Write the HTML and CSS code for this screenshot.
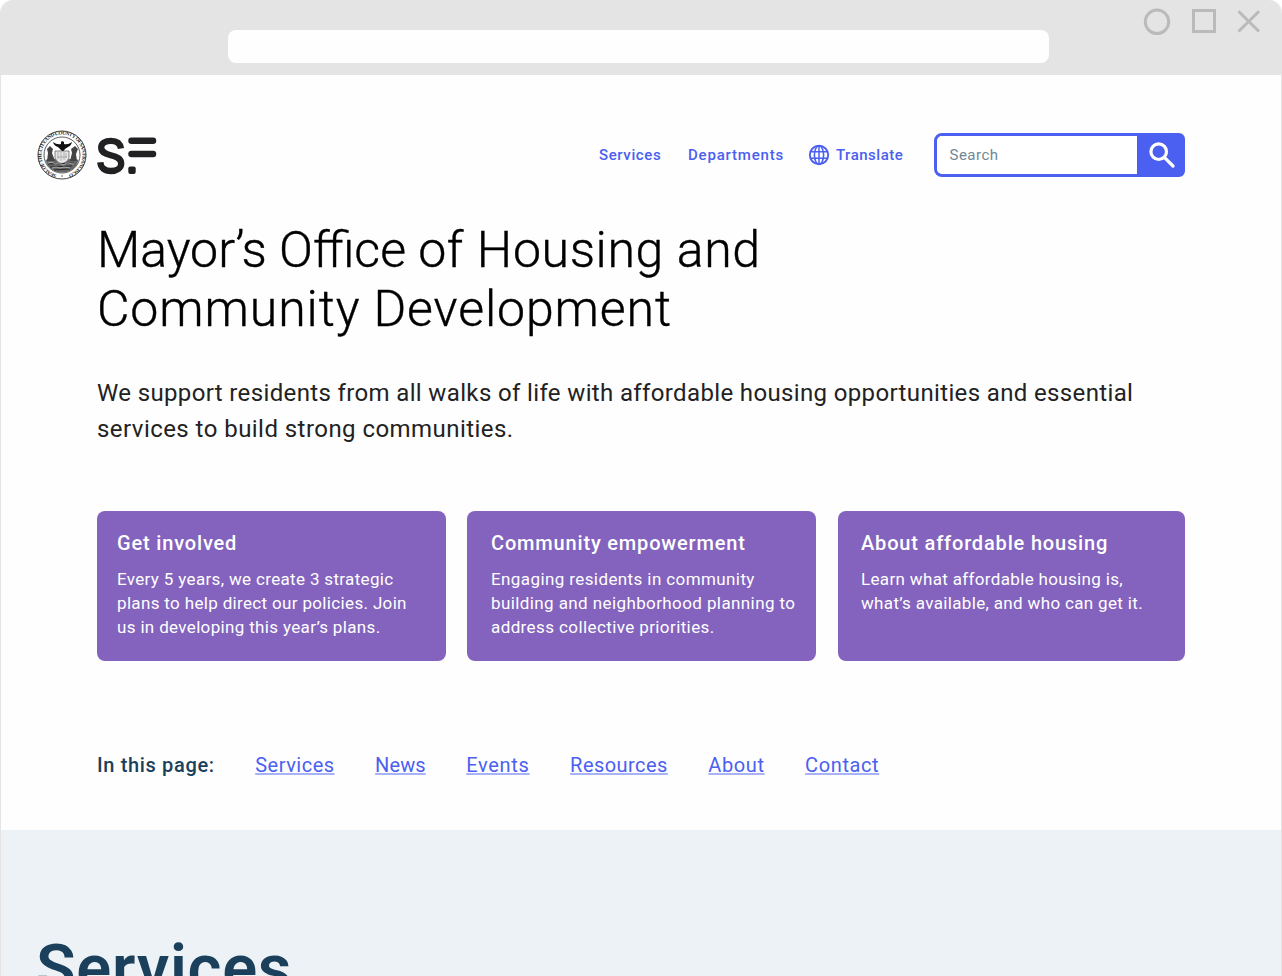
FILE: index.html
```html
<!DOCTYPE html>
<html lang="en">
<head>
<meta charset="utf-8">
<title>Mayor’s Office of Housing and Community Development</title>
<link rel="stylesheet" href="styles.css">
</head>
<body>
<div class="window">
  <div class="chrome">
    <div class="address"></div>
    <svg class="controls" width="118" height="28" viewBox="0 0 118 28" fill="none" stroke="#bababa" stroke-width="3">
      <circle cx="14" cy="13.800" r="11.700"/>
      <rect x="50.500" y="2.500" width="21" height="21"/>
      <path d="M95.500 3.200 116 23.500M116 3.200 95.500 23.500"/>
    </svg>
  </div>
  <header class="header">
    <a class="brand">
      <svg width="50" height="50" viewBox="0 0 50 50">
        <defs><path id="ring" d="M19.500 44.800A20.500 20.500 0 1 1 30.500 44.800"/></defs>
        <circle cx="25" cy="25" r="24" fill="#fff" stroke="#333" stroke-width=".9"/>
        <text class="seal-text"><textPath href="#ring" textLength="116">SEAL OF THE CITY AND COUNTY OF SAN FRANCISCO</textPath></text>
        <circle cx="25" cy="46" r=".7" fill="#333"/>
        <circle cx="25" cy="25" r="18" fill="#fff" stroke="#333" stroke-width=".8"/>
        <path d="M8.500 30q4-2 8-1h16q5-1 9 1-2 8-9 11-7 3-15 0-7-3-9-11Z" fill="#666"/>
        <path d="M10 31l1-8-1-4 3-3 3 3-1 4 3 8zM40 31l-1-7 2-5-3-3-4 3 1 4-2 8z" fill="#444"/>
        <path d="M16 12q4 3 8 2v-2l1-1 2 1v2q4 1 8-2-1 4-4 5l-3 2-2 3-3-3-2-2q-4-1-5-5Z" fill="#111"/>
        <path d="M18 21h14v7q-1 4-7 6-6-2-7-6Z" fill="#e6e6e6" stroke="#555" stroke-width=".7"/>
        <path d="M21 22v7m3-7v9m3-9v8m2-7v5M20 27h10" stroke="#999" stroke-width=".7"/>
        <path d="M11 34l26-1M13 37l22-1M17 40l16-1" stroke="#222" stroke-width=".9"/>
        <path d="M11 33l4-1 3 2 4-1 4 2 4-2 7 1M15 38l4-1 4 1 4-1 6 1" stroke="#ddd" stroke-width=".6" fill="none"/>
      </svg>
      <svg class="wordmark" width="60" height="38" viewBox="0 0 60 38" fill="none" stroke="#212123">
        <path d="M24 11.500C23.200 6.500 19.600 3.800 14 3.800 8 3.800 4.200 6.500 4.200 10.500c0 4.800 4 6.300 9.500 7.700 6.300 1.500 10.500 3.300 10.500 8.300 0 4.500-4.200 7.500-10.200 7.500-6.500 0-10.300-3.200-10.700-8.700" stroke-width="6.300"/>
        <path d="M34.500 3.800h21.500M34.500 17h21.500" stroke-width="6.500" stroke-linecap="round"/>
        <rect x="31.300" y="29.600" width="7.400" height="7.400" rx="2" fill="#212123" stroke="none"/>
      </svg>
    </a>
    <nav class="nav">
      <a class="nav-services">Services</a>
      <a class="nav-departments">Departments</a>
      <a class="nav-translate">
        <svg width="22" height="22" viewBox="0 0 22 22" fill="none" stroke="#4b60f0" stroke-width="1.900">
          <circle cx="11" cy="11" r="9.200"/><ellipse cx="11" cy="11" rx="4.600" ry="9.200" stroke-width="1.600"/><path d="M11 2v18M2.500 7.800h17M2.500 14.200h17" stroke-width="1.500"/>
        </svg>
        <span>Translate</span>
      </a>
    </nav>
    <div class="search">
      <span class="search-input">Search</span>
      <span class="search-button">
        <svg width="28" height="28" viewBox="0 0 28 28" fill="none" stroke="#fff" stroke-width="3.200"><circle cx="10.700" cy="10.700" r="7.800"/><path d="M16.300 16.300 25 25" stroke-linecap="round"/></svg>
      </span>
    </div>
  </header>
  <main class="main">
    <h1 class="title"><span class="title-name">Mayor’s Office </span><span class="title-a">of Housing and</span><br><span class="title-b">Community Development</span></h1>
    <p class="intro">We support residents from all walks of life with affordable housing opportunities and essential<br><span class="intro-end">services to build strong communities.</span></p>
    <div class="cards">
      <section class="card">
        <h2>Get involved</h2>
        <p>Every 5 years, we create 3 strategic<br>plans to help direct our policies. Join<br>us in developing this year’s plans.</p>
      </section>
      <section class="card card-wide">
        <h2>Community empowerment</h2>
        <p>Engaging residents in community<br>building and neighborhood planning to<br>address collective priorities.</p>
      </section>
      <section class="card card-last">
        <h2>About affordable housing</h2>
        <p>Learn what affordable housing is,<br>what’s available, and who can get it.</p>
      </section>
    </div>
    <nav class="toc">
      <strong>In this page:</strong>
      <a class="toc-services">Services</a>
      <a class="toc-news">News</a>
      <a class="toc-events">Events</a>
      <a class="toc-resources">Resources</a>
      <a class="toc-about">About</a>
      <a class="toc-contact">Contact</a>
    </nav>
  </main>
  <section class="services"><h2>Services</h2></section>
</div>
</body>
</html>
```
FILE: styles.css
```css
* { box-sizing: border-box; }
body { margin: 0; background: #fff; font-family: Roboto, "Liberation Sans", sans-serif; }
h1, h2, p { margin: 0; }
.window { height: 976px; overflow: hidden; border: solid #e4e4e4; border-width: 0 1px; border-radius: 13px 13px 0 0; background: #fefefe; display: flex; flex-direction: column; }
.chrome { height: 75px; flex: none; background: #e4e4e4; display: flex; padding: 8px 20px 0 227px; justify-content: space-between; }
.address { width: 821px; height: 33px; margin-top: 22px; border-radius: 8px; background: #fefefe; }
.header { height: 160px; flex: none; display: flex; align-items: center; padding: 0 96px 0 36px; }
.brand { display: flex; align-items: center; gap: 10px; margin-right: auto; }
.wordmark { margin-top: 2px; }
.seal-text { font: bold 5.200px "Liberation Serif", serif; fill: #222; }
.nav { display: flex; align-items: center; color: #4b60f0; font-size: 15px; font-weight: 500; line-height: 22px; white-space: nowrap; }
.nav a { flex: none; }
.nav-services { width: 89px; letter-spacing: .6px; }
.nav-departments { width: 120px; letter-spacing: .8px; }
.nav-translate { width: 126px; display: flex; gap: 6px; letter-spacing: .5px; }
.search { width: 251px; height: 44px; display: flex; border: 3px solid #4b60f0; border-radius: 8px 6px 6px 8px; background: linear-gradient(to right, #fff 50%, #4b60f0 50%) border-box; overflow: hidden; }
.search-input { flex: 1; padding-left: 12.500px; font-size: 15px; line-height: 39px; color: #718796; letter-spacing: .5px; background: #fff; border-radius: 5px 0 0 5px; }
.search-button { width: 45px; background: #4b60f0; display: flex; justify-content: center; align-items: center; padding-left: 4px; }
.main { height: 595px; flex: none; padding: 0 96px; white-space: nowrap; }
.title { margin-top: -14px; font-size: 50px; line-height: 59px; font-weight: 300; color: #000; -webkit-text-stroke: .4px #000; }
.title-a { letter-spacing: .63px; }
.title-b { letter-spacing: .9px; }
.intro { margin-top: 36px; font-size: 24px; line-height: 36px; color: #222; letter-spacing: .36px; }
.intro-end { letter-spacing: .45px; }
.cards { display: grid; grid-template-columns: 349px 350px 347px; column-gap: 21px; margin-top: 64px; }
.card { height: 150px; border-radius: 8px; background: #8363bd; color: #fff; padding: 20px; letter-spacing: .34px; }
.card-wide { width: 349px; padding-left: 24px; letter-spacing: .4px; }
.card-last { padding-left: 23px; letter-spacing: .34px; }
.card h2 { font-size: 20px; line-height: 24px; font-weight: 500; letter-spacing: .83px; }
.card p { margin-top: 12px; font-size: 17px; line-height: 24px; }
.toc { display: flex; margin-top: 92px; font-size: 20px; line-height: 24px; gap: 40.500px; }
.toc strong { font-weight: 500; color: #1b405b; letter-spacing: .65px; }
.toc a { color: #4b60f0; text-decoration: underline; text-decoration-color: #a8b2f8; text-decoration-thickness: 2px; text-underline-offset: 1px; letter-spacing: .5px; }
.toc .toc-news { letter-spacing: .1px; }
.toc .toc-events { letter-spacing: .7px; }
.toc .toc-resources { letter-spacing: .45px; }
.toc .toc-about, .toc .toc-contact { letter-spacing: .6px; }
.services { flex: 1; background: #edf2f6; padding: 102px 35px 0; }
.services h2 { font-size: 65px; line-height: 72px; font-weight: 600; color: #1b405b; letter-spacing: .7px; }
```
